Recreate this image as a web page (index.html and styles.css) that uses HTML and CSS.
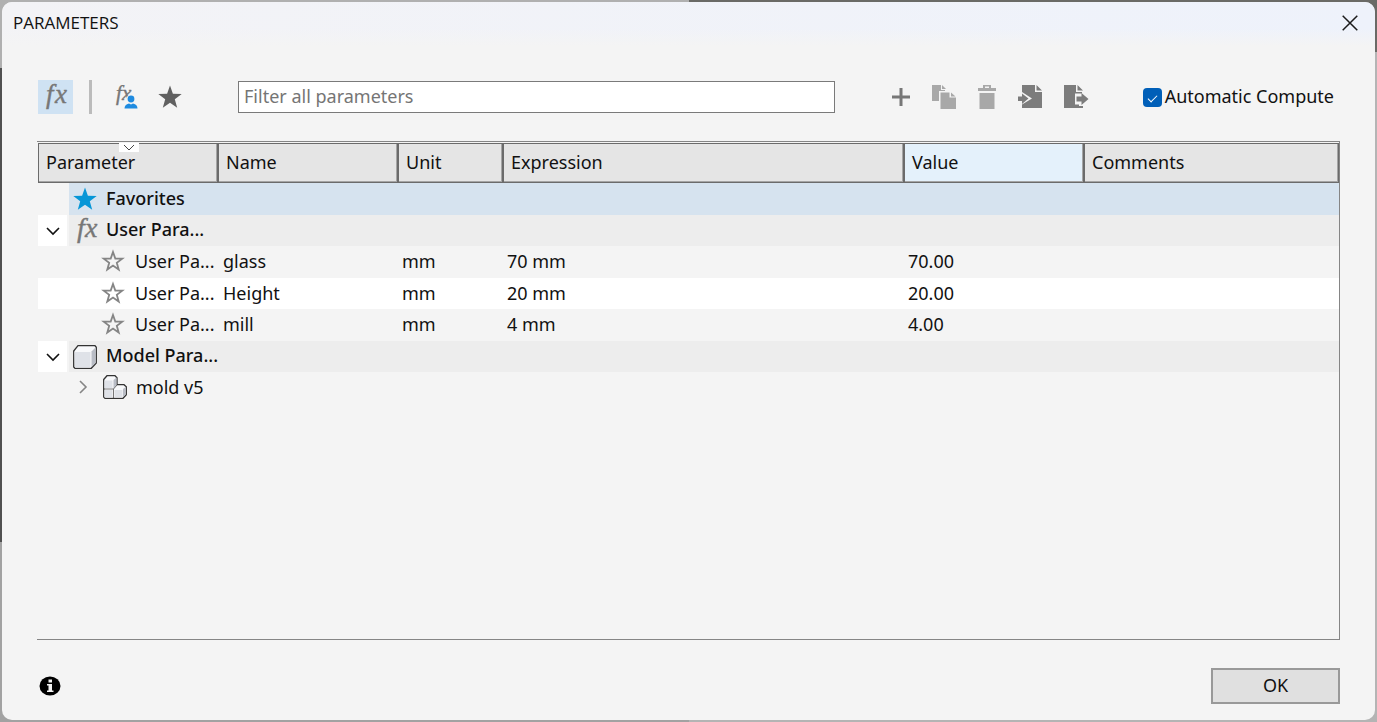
FILE: index.html
```html
<!DOCTYPE html>
<html lang="en">
<head>
<meta charset="utf-8">
<title>Parameters</title>
<link rel="stylesheet" href="styles.css">
</head>
<body>
<svg class="defs" aria-hidden="true">
  <symbol id="star" viewBox="0 0 24 24"><path d="M12 .500l2.900 8.200 8.800.3-6.900 5.200 2.400 8.500L12 17.700l-7.200 5 2.400-8.500L.3 9l8.800-.3z"/></symbol>
  <symbol id="star-outline" viewBox="0 0 24 24"><path d="M12 3l2.300 6.500 7 .2-5.500 4.100 1.900 6.700L12 16.500l-5.700 4 1.900-6.700-5.500-4.100 7-.2z" fill="none" stroke="currentColor" stroke-width="1.800"/></symbol>
  <symbol id="chevron" viewBox="0 0 16 16"><path d="M2 5L8 11 14 5" fill="none" stroke="currentColor" stroke-width="1.600"/></symbol>
</svg>
<main class="dialog">
  <header class="titlebar">
    <h1 class="title">PARAMETERS</h1>
    <button class="close" aria-label="Close"><svg width="16" height="16" viewBox="0 0 16 16"><path d="M.7.7l14.600 14.600M15.300.7L.7 15.300" stroke="#1b1b1b" stroke-width="1.500"/></svg></button>
  </header>
  <div class="toolbar">
    <button class="tool tool-active" aria-label="All parameters"><svg class="fx" width="28" height="30" viewBox="0 0 28 30"><text x="4" y="21" font-size="27">f</text><text x="13" y="21" font-size="27">x</text></svg></button>
    <span class="divider"></span>
    <button class="tool tool-user" aria-label="User parameters"><svg class="fx" width="28" height="28" viewBox="0 0 28 28"><text x="4" y="17" font-size="21">f</text><text x="10" y="17" font-size="21">x</text><circle cx="19" cy="16" r="4.500" fill="#f4f4f4"/><path d="M11.500 26v-2q1-3 5-4h5q4 1 5 4v2z" fill="#f4f4f4"/><circle cx="19" cy="16" r="3.400" fill="#1f8be0"/><path d="M12.500 25.500q0-4 4.500-5l2 1 2-1q4.500 1 4.500 5z" fill="#1f8be0"/></svg></button>
    <button class="tool tool-star" aria-label="Favorites"><svg width="24" height="24"><use href="#star"/></svg></button>
    <input class="filter" type="text" placeholder="Filter all parameters" aria-label="Filter all parameters">
    <div class="actions">
      <button class="tool" aria-label="Add"><svg width="20" height="20" viewBox="0 0 20 20"><path d="M10 1v18M1 10h18" stroke="#777" stroke-width="3"/></svg></button>
      <button class="tool" aria-label="Copy"><svg width="26" height="26" viewBox="0 0 26 26" fill="#a8a8a8"><path d="M1 1h9v5h4v1H8v10H1zM11 1l4 4h-4z"/><path d="M9.500 8.500h9v5h6.500V25H9.500zM20 8.500l4.500 4H20z"/></svg></button>
      <button class="tool" aria-label="Delete"><svg width="20" height="26" viewBox="0 0 20 26" fill="#a8a8a8"><path d="M6 1h8v3h5v3H1V4h5zm2 1.500V4h4V2.500zM2.500 9h15v16h-15z" fill-rule="evenodd"/></svg></button>
      <button class="tool" aria-label="Import"><svg width="26" height="26" viewBox="0 0 26 26" fill="#7c7c7c"><path d="M5 1h13v7h7v16H5v-3.500l10-6L5 8zM19.500 1L25 6.500h-5.500z"/><path d="M1 12.500h4V9.500l6.500 5-6.500 5.500V17H1z"/></svg></button>
      <button class="tool" aria-label="Export"><svg width="26" height="26" viewBox="0 0 26 26" fill="#7c7c7c"><path d="M1 1h12v7h6v1.500h-7v11h4V22h4v2H1zM14.500 1L20 6.500h-5.500z"/><path d="M13.500 12.500h5V9l7 6-7 6v-3.500h-5z"/></svg></button>
    </div>
    <label class="auto"><input class="check" type="checkbox" checked><span class="auto-text">Automatic Compute</span></label>
  </div>
  <section class="grid">
    <table class="params">
      <colgroup><col class="c-mid"><col class="c-mid"><col class="c-unit"><col class="c-expr"><col class="c-mid"><col></colgroup>
      <thead>
        <tr><th class="sorted">Parameter<svg class="sort" width="20" height="9" viewBox="0 0 20 9"><path d="M5 2l5 5 5-5" fill="none" stroke="#444"/></svg></th><th>Name</th><th>Unit</th><th>Expression</th><th class="hovered">Value</th><th>Comments</th></tr>
      </thead>
      <tbody>
        <tr class="selected"><td><div class="tree"><span class="gutter"></span><span class="node"><svg class="fav" width="24" height="24"><use href="#star"/></svg><b>Favorites</b></span></div></td><td></td><td></td><td></td><td></td><td></td></tr>
        <tr class="group"><td><div class="tree"><button class="gutter toggle" aria-label="Collapse user parameters"><svg width="16" height="16"><use href="#chevron"/></svg></button><span class="node"><svg class="fx" width="24" height="28" viewBox="0 0 24 28"><text x="4" y="20" font-size="28">f</text><text x="12" y="20" font-size="28">x</text></svg><b>User Para...</b></span></div></td><td></td><td></td><td></td><td></td><td></td></tr>
        <tr><td><div class="tree leaf"><svg class="mark" width="24" height="24"><use href="#star-outline"/></svg>User Pa...</div></td><td>glass</td><td>mm</td><td>70 mm</td><td>70.00</td><td></td></tr>
        <tr class="alt"><td><div class="tree leaf"><svg class="mark" width="24" height="24"><use href="#star-outline"/></svg>User Pa...</div></td><td>Height</td><td>mm</td><td>20 mm</td><td>20.00</td><td></td></tr>
        <tr><td><div class="tree leaf"><svg class="mark" width="24" height="24"><use href="#star-outline"/></svg>User Pa...</div></td><td>mill</td><td>mm</td><td>4 mm</td><td>4.00</td><td></td></tr>
        <tr class="group"><td><div class="tree"><button class="gutter toggle" aria-label="Collapse model parameters"><svg width="16" height="16"><use href="#chevron"/></svg></button><span class="node"><svg width="24" height="24" viewBox="0 0 24 24"><path d="M.7 6L5 .7h17l1.300 1.500V18l-5 5.300H2L.7 22z" fill="#f8f9fb" stroke="#333" stroke-width="1.300"/><path d="M1.500 7h16v15.500H2z" fill="#dfe2e8"/><path d="M18.500 6.500l4-4V18l-4 4z" fill="#b9bdc6"/></svg><b>Model Para...</b></span></div></td><td></td><td></td><td></td><td></td><td></td></tr>
        <tr><td><div class="tree leaf branch"><button class="expand" aria-label="Expand mold v5"><svg width="16" height="16"><use href="#chevron" transform="rotate(-90 8 8)"/></svg></button><svg width="24" height="24" viewBox="0 0 24 24"><path d="M.7 4.500L4 .7h8l2 2v7h7l2.300 2v8L20 23.300H2L.7 22z" fill="#f8f9fb" stroke="#333" stroke-width="1.300"/><path d="M1.500 5.500h8V13h-8zM1.500 15h8v7.500h-8zM11.500 15h8v7.500h-8z" fill="#dfe2e8"/><path d="M10.500 5l3-2.500V10l-3 4zM20 14l2.700-2v7.500L20 22z" fill="#b9bdc6"/><path d="M1 14h9.500v9M10.500 14l3.500-4" fill="none" stroke="#555" stroke-width=".8"/></svg>mold v5</div></td><td></td><td></td><td></td><td></td><td></td></tr>
      </tbody>
    </table>
  </section>
  <footer class="footer">
    <button class="info" aria-label="Information"><svg width="22" height="20" viewBox="0 0 22 20"><ellipse cx="11" cy="10" rx="10.500" ry="9.500"/><path d="M9.500 3.500h3.500v3H9.500zM8 8h5v6.500h1.500V16H8v-1.500h1.500V9.500H8z" fill="#f4f4f4"/></svg></button>
    <button class="ok">OK</button>
  </footer>
</main>
</body>
</html>
```

FILE: styles.css
```css
* { box-sizing: border-box; }
body {
  margin: 0;
  min-height: 100vh;
  padding: 2px;
  display: flex;
  background:
    linear-gradient(#6a6a66 0 52px, #b4b4b4 52px) right / 50% 100% no-repeat,
    linear-gradient(#b0b0b0 0 68px, #505050 68px 75%, #a2a2a2 75%);
  font: 18px/24px "Noto Sans", sans-serif;
  color: #111;
}
button { padding: 0; border: 0; background: none; color: inherit; font: inherit; }
svg { display: block; flex: none; }
.defs { position: absolute; width: 0; height: 0; }
.dialog {
  flex: 1;
  min-width: 0;
  display: flex;
  flex-direction: column;
  border-radius: 10px;
  background: #f4f4f4;
}
.titlebar {
  display: flex;
  align-items: center;
  justify-content: space-between;
  height: 44px;
  padding: 0 17px 3px 11px;
  border-radius: 10px 10px 0 0;
  background: linear-gradient(transparent 60%, #f4f4f4), linear-gradient(90deg, #f3f3f6, #eef2fb);
}
.title { margin: 0; font: 17px/24px "Open Sans", sans-serif; }
.toolbar { display: flex; align-items: center; height: 34px; margin: 34px 41px 27px 36px; }
.tool { display: grid; place-items: center; height: 32px; }
.tool-active { width: 35px; height: 34px; background: #cfe2f3; }
.divider { width: 3px; height: 34px; margin-left: 16px; background: #bbb; }
.tool-user { margin-left: 20px; }
.tool-star { margin-left: 18px; fill: #606060; }
.fx {
  font-family: "Liberation Serif", serif;
  font-style: italic;
  fill: #777;
  overflow: visible;
}
.fx text { stroke: #777; stroke-width: 0.4; }
.filter {
  flex: 1;
  min-width: 0;
  height: 32px;
  margin-left: 56px;
  padding: 0 5px 2px;
  border: 1px solid #7a7a7a;
  border-radius: 0;
  background: #fff;
  font: inherit;
}
.filter::placeholder { color: #757575; }
.actions { display: flex; gap: 20px; margin-left: 56px; }
.auto { display: flex; align-items: center; gap: 3px; margin-left: 54px; white-space: nowrap; }
.auto-text { padding-bottom: 3px; }
.check {
  appearance: none;
  display: grid;
  place-items: center;
  width: 19px;
  height: 19px;
  margin: 0;
  border-radius: 4px;
  background: #005fb8;
}
.check::before {
  content: "";
  width: 8px;
  height: 4px;
  border: solid #fff;
  border-width: 0 0 1px 1px;
  transform: rotate(-45deg);
}
.grid {
  flex: 1;
  margin: 0 35px;
  padding: 1px 0 0 1px;
  border: 1px solid #858585;
  border-left: 0;
}
.params {
  width: 100%;
  table-layout: fixed;
  border-collapse: separate;
  border-spacing: 0;
  white-space: nowrap;
}
.c-mid { width: 180px; }
.c-unit { width: 105px; }
.c-expr { width: 401px; }
.params th {
  height: 40px;
  padding: 0 7px 2px;
  border: 1px solid #6b6b6b;
  background: #e5e5e5;
  box-shadow: inset -1px -1px #a5a5a5;
  font-weight: 400;
  text-align: left;
}
.params .hovered { background: #e4f1fb; }
.sorted { position: relative; }
.sort { position: absolute; top: -1px; left: 45%; background: #fff; }
.params td { height: 31px; padding: 0 4px 2px; }
.params tr:nth-child(odd) td { height: 32px; }
.params td:first-child { padding: 0; }
.params td:nth-child(2) { padding-left: 5px; }
.selected td, .selected .node { background: #d6e3ef; }
.group td, .group .node { background: #ededed; }
.params .selected td:first-child, .params .group td:first-child { background: none; }
.params .alt td { background: #fff; }
.tree { display: flex; align-items: center; height: 100%; }
.gutter { width: 29px; margin-right: 2px; }
.toggle { display: grid; place-items: center; align-self: stretch; background: #fff; }
.node {
  flex: 1;
  min-width: 0;
  display: flex;
  align-items: center;
  align-self: stretch;
  gap: 9px;
  padding-left: 4px;
}
.node b { padding-bottom: 3px; font-weight: 500; }
.fav { fill: #0696d7; }
.leaf { gap: 10px; padding: 0 0 2px 63px; }
.mark { color: #858585; }
.branch { gap: 9px; padding-left: 37px; }
.expand { margin-right: 3px; color: #858585; }
.footer {
  display: flex;
  align-items: center;
  justify-content: space-between;
  height: 80px;
  padding: 12px 35px 0 37px;
}
.ok { width: 129px; height: 36px; padding-bottom: 2px; border: 2px solid #999; background: #e0e0e0; }
```
